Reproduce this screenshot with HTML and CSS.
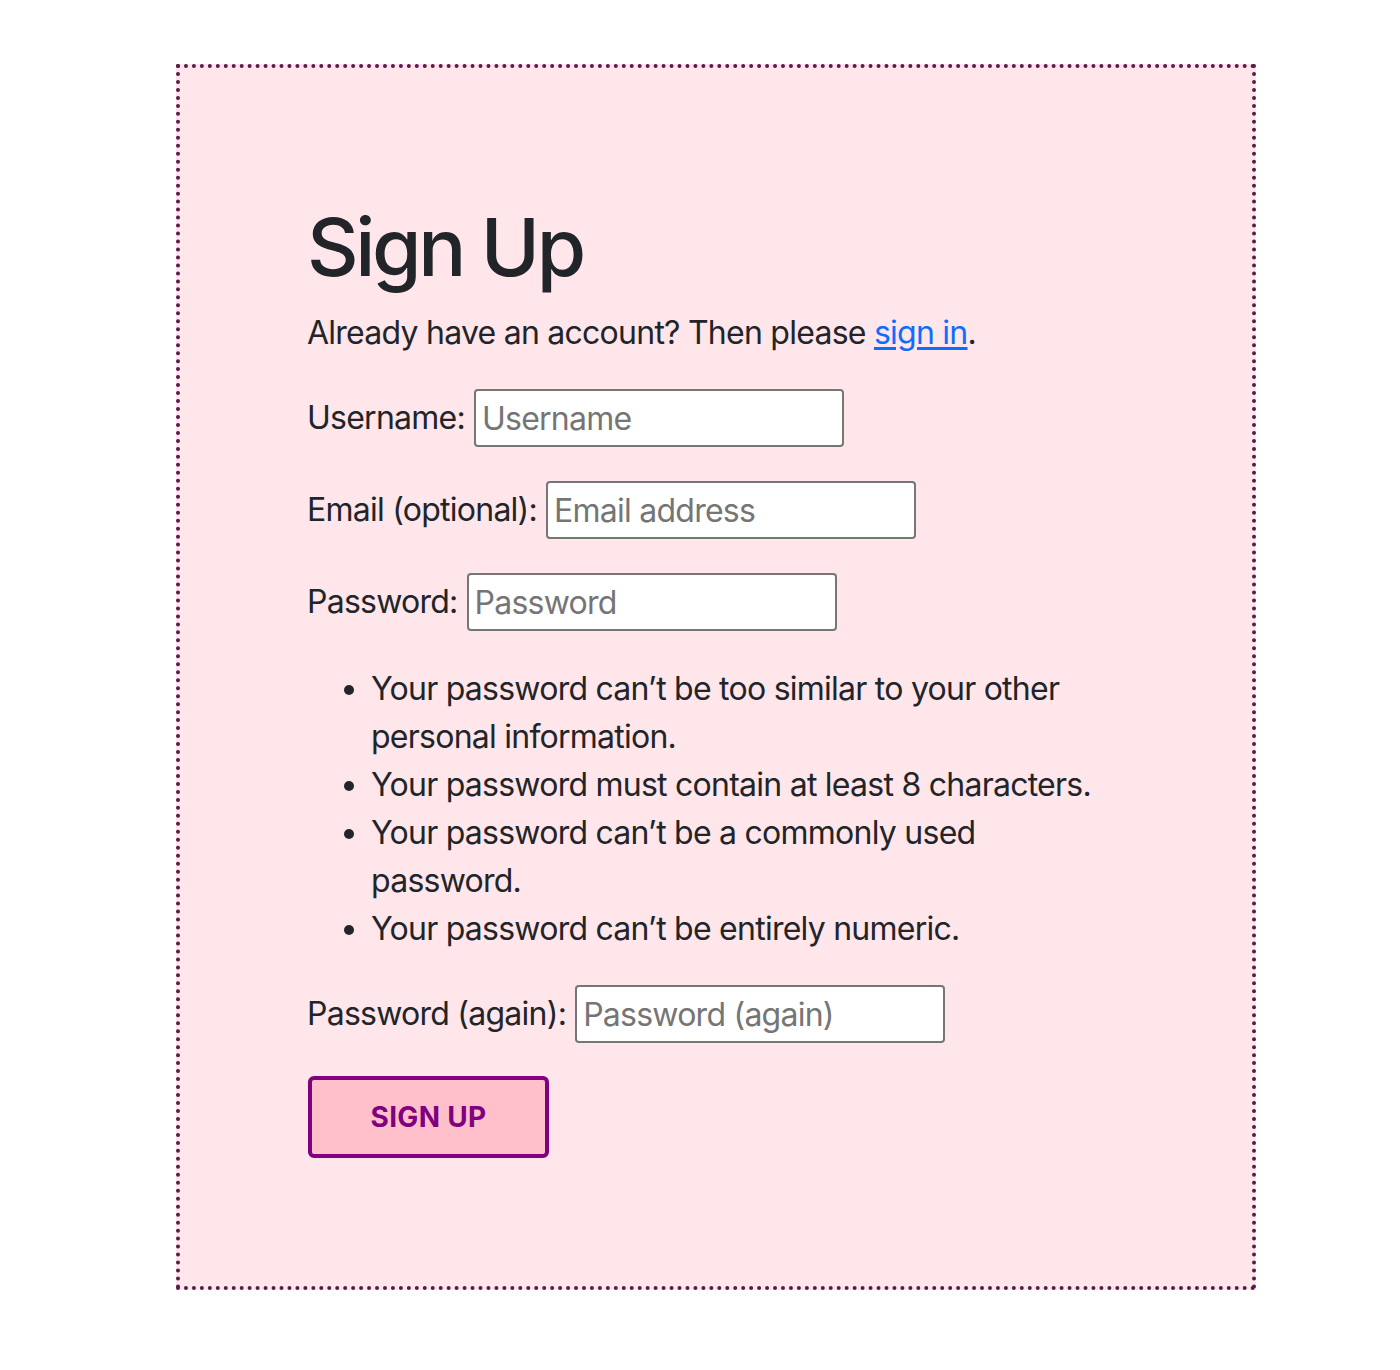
FILE: index.html
```html
<!DOCTYPE html>
<html lang="en">
<head>
<meta charset="utf-8">
<title>Sign Up</title>
<link rel="stylesheet" href="styles.css">
</head>
<body>
<main class="card">
  <h1 class="title">Sign Up</h1>
  <p class="intro">Already have an account? Then please <a href="#" class="link">sign in</a>.</p>
  <form class="form">
    <div class="row">
      <label class="label" for="username">Username:</label>
      <input class="field" id="username" type="text" placeholder="Username">
    </div>
    <div class="row">
      <label class="label" for="email">Email (optional):</label>
      <input class="field" id="email" type="email" placeholder="Email address">
    </div>
    <div class="row">
      <label class="label" for="password1">Password:</label>
      <input class="field" id="password1" type="password" placeholder="Password">
    </div>
    <ul class="rules">
      <li>Your password can’t be too similar to your other personal information.</li>
      <li>Your password must contain at least 8 characters.</li>
      <li>Your password can’t be a commonly used password.</li>
      <li>Your password can’t be entirely numeric.</li>
    </ul>
    <div class="row">
      <label class="label" for="password2">Password (again):</label>
      <input class="field" id="password2" type="password" placeholder="Password (again)">
    </div>
    <button class="submit" type="submit">SIGN UP</button>
  </form>
</main>
</body>
</html>
```

FILE: styles.css
```css
* { box-sizing: border-box; }

html, body {
  margin: 0;
  padding: 0;
  background: #ffffff;
}

body {
  font-family: Inter, "Noto Sans", "Liberation Sans", sans-serif;
  font-size: 32px;
  line-height: 48px;
  letter-spacing: -0.75px;
  color: #212529;
}

.card {
  margin: 64px 0 0 176px;
  width: 1080px;
  height: 1226px;
  border: 4px dotted #5b1a4a;
  background: #ffe6ea;
  padding: 131px 129px 0 127px;
}

.title {
  margin: 0 0 14px 0;
  font-size: 80px;
  line-height: 96px;
  font-weight: 500;
  letter-spacing: -3.4px;
}

.intro {
  margin: 0 0 32px 0;
}

.link {
  color: #0d6efd;
  text-decoration: underline;
  text-underline-offset: 3px;
}

.form {
  display: flex;
  flex-direction: column;
  align-items: flex-start;
}

.row {
  display: flex;
  align-items: center;
  gap: 9px;
  margin-bottom: 34px;
}

.label {
  white-space: nowrap;
}

.field {
  width: 370px;
  height: 58px;
  border: 2px solid #767676;
  border-radius: 4px;
  background: #ffffff;
  padding: 0 6px;
  font-family: inherit;
  font-size: 32px;
  letter-spacing: -0.75px;
  color: #212529;
}

.field::placeholder {
  color: #757575;
}

.rules {
  margin: 0 0 32px 0;
  padding-left: 64px;
  max-width: 800px;
}

.submit {
  margin-top: -1px;
  margin-left: 1px;
  width: 241px;
  height: 82px;
  border: 4px solid #800080;
  border-radius: 6px;
  background: #ffc0cb;
  color: #800080;
  font-family: inherit;
  font-size: 28px;
  font-weight: 700;
  letter-spacing: 0.3px;
  padding: 0;
}
```
